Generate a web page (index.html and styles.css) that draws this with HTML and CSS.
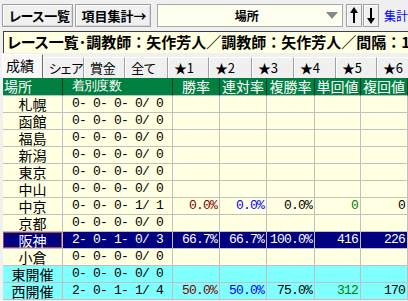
FILE: index.html
```html
<!DOCTYPE html>
<html lang="ja">
<head>
<meta charset="utf-8">
<title>項目集計</title>
<link rel="stylesheet" href="styles.css">
</head>
<body>
<div class="toolbar">
  <button class="btn btn-list">レース一覧</button>
  <button class="btn btn-agg">項目集計→</button>
  <div class="combo"><span class="combo-text">場所</span><span class="combo-arrow"></span></div>
  <button class="abtn"><svg width="14" height="21" viewBox="0 0 14 21"><rect x="6" y="6" width="2" height="12" fill="#000"/><polygon points="7,2 3,8 11,8" fill="#000"/></svg></button>
  <button class="abtn abtn-2"><svg width="14" height="21" viewBox="0 0 14 21"><rect x="6" y="3" width="2" height="12" fill="#000"/><polygon points="7,19 3,13 11,13" fill="#000"/></svg></button>
  <span class="link">集計</span>
</div>
<div class="titlebar"><span class="kana">レース一覧</span>･調教師：矢作芳人／調教師：矢作芳人／間隔：1</div>
<div class="tabs">
  <div class="tab active w41">成績</div>
  <div class="tab w41">シェア</div>
  <div class="tab w41">賞金</div>
  <div class="tab w43">全て</div>
  <div class="tab w41">★1</div>
  <div class="tab w43">★2</div>
  <div class="tab w42">★3</div>
  <div class="tab w42">★4</div>
  <div class="tab w41">★5</div>
  <div class="tab w42">★6</div>
</div>
<div class="table">
  <div class="row head">
    <div class="c place">場所</div><div class="c count">着別度数</div><div class="c">勝率</div><div class="c">連対率</div><div class="c">複勝率</div><div class="c">単回値</div><div class="c">複回値</div>
  </div>
  <div class="row"><div class="c place">札幌</div><div class="c count">0- 0- 0- 0/ 0</div><div class="c"></div><div class="c"></div><div class="c"></div><div class="c"></div><div class="c"></div></div>
  <div class="row"><div class="c place">函館</div><div class="c count">0- 0- 0- 0/ 0</div><div class="c"></div><div class="c"></div><div class="c"></div><div class="c"></div><div class="c"></div></div>
  <div class="row"><div class="c place">福島</div><div class="c count">0- 0- 0- 0/ 0</div><div class="c"></div><div class="c"></div><div class="c"></div><div class="c"></div><div class="c"></div></div>
  <div class="row"><div class="c place">新潟</div><div class="c count">0- 0- 0- 0/ 0</div><div class="c"></div><div class="c"></div><div class="c"></div><div class="c"></div><div class="c"></div></div>
  <div class="row"><div class="c place">東京</div><div class="c count">0- 0- 0- 0/ 0</div><div class="c"></div><div class="c"></div><div class="c"></div><div class="c"></div><div class="c"></div></div>
  <div class="row"><div class="c place">中山</div><div class="c count">0- 0- 0- 0/ 0</div><div class="c"></div><div class="c"></div><div class="c"></div><div class="c"></div><div class="c"></div></div>
  <div class="row"><div class="c place">中京</div><div class="c count">0- 0- 0- 1/ 1</div><div class="c num win">0.0%</div><div class="c num ren">0.0%</div><div class="c num">0.0%</div><div class="c num tan">0</div><div class="c num">0</div></div>
  <div class="row"><div class="c place">京都</div><div class="c count">0- 0- 0- 0/ 0</div><div class="c"></div><div class="c"></div><div class="c"></div><div class="c"></div><div class="c"></div></div>
  <div class="row hl"><div class="c place focus">阪神</div><div class="c count">2- 0- 1- 0/ 3</div><div class="c num win">66.7%</div><div class="c num ren">66.7%</div><div class="c num">100.0%</div><div class="c num tan">416</div><div class="c num">226</div></div>
  <div class="row"><div class="c place">小倉</div><div class="c count">0- 0- 0- 0/ 0</div><div class="c"></div><div class="c"></div><div class="c"></div><div class="c"></div><div class="c"></div></div>
  <div class="row cy"><div class="c place">東開催</div><div class="c count">0- 0- 0- 0/ 0</div><div class="c"></div><div class="c"></div><div class="c"></div><div class="c"></div><div class="c"></div></div>
  <div class="row cy"><div class="c place">西開催</div><div class="c count">2- 0- 1- 1/ 4</div><div class="c num win">50.0%</div><div class="c num ren">50.0%</div><div class="c num">75.0%</div><div class="c num tan">312</div><div class="c num">170</div></div>
</div>
</body>
</html>
```

FILE: styles.css
```css
* { box-sizing: border-box; }
html, body { margin: 0; padding: 0; }
body {
  width: 408px;
  height: 301px;
  overflow: hidden;
  background: #f0f0f0;
  color: #000;
  font-family: "Noto Sans CJK JP", "Noto Sans", sans-serif;
}

/* toolbar */
.toolbar {
  display: flex;
  align-items: flex-start;
  height: 30px;
  padding: 4px 0 0 2px;
  white-space: nowrap;
}
.btn {
  height: 23px;
  margin: 0;
  padding: 0 0 0 6px;
  background: #f0f0f0;
  border: 1px solid #a0a0a0;
  box-shadow: inset 1px 1px 0 #ffffff, inset -1px -1px 0 #d8d8d8;
  font-family: "Noto Sans CJK JP", sans-serif;
  font-weight: bold;
  font-size: 13px;
  line-height: 20px;
  font-feature-settings: "palt";
  text-align: left;
  white-space: nowrap;
  overflow: hidden;
  color: #000;
}
.btn-list { width: 72px; letter-spacing: -0.3px; }
.btn-agg { width: 76px; margin-left: 2px; padding-left: 5px; letter-spacing: 0; }
.combo {
  display: flex;
  align-items: center;
  width: 188px;
  height: 23px;
  margin-left: 6px;
  background: #fffff0;
  border: 1px solid #a8a8a8;
}
.combo-text {
  flex: 1;
  text-align: center;
  padding-left: 10px;
  font-weight: bold;
  font-size: 12px;
  line-height: 21px;
}
.combo-arrow {
  width: 0;
  height: 0;
  margin-right: 4px;
  border-left: 6px solid transparent;
  border-right: 6px solid transparent;
  border-top: 7px solid #888888;
}
.abtn {
  width: 16px;
  height: 23px;
  margin: 0 0 0 3px;
  padding: 0;
  background: #f0f0f0;
  border: 1px solid #a0a0a0;
  box-shadow: inset 1px 1px 0 #ffffff;
  display: flex;
  align-items: center;
  justify-content: center;
}
.abtn svg { display: block; }
.abtn-2 { margin-left: 1px; }
.link {
  margin-left: 5px;
  color: #0000ff;
  font-size: 12px;
  line-height: 23px;
}

/* title */
.titlebar {
  margin: 1px 0 0 3px;
  height: 22px;
  padding-left: 3px;
  background: #ffffe1;
  border-top: 1px solid #404040;
  border-left: 1px solid #404040;
  font-weight: bold;
  font-size: 15px;
  line-height: 20px;
  white-space: nowrap;
  overflow: hidden;
}
.kana { font-feature-settings: "palt"; }

/* tabs */
.tabs {
  display: flex;
  align-items: flex-end;
  height: 24px;
  margin-top: 1px;
  padding-left: 2px;
  overflow: hidden;
}
.tab {
  flex: none;
  height: 21px;
  padding-left: 5px;
  border-top: 1px solid #ffffff;
  border-left: 1px solid #ffffff;
  border-right: 1px solid #a0a0a0;
  font-size: 13px;
  line-height: 19px;
  font-feature-settings: "palt";
  letter-spacing: -0.3px;
  white-space: nowrap;
}
.tab.active {
  height: 24px;
  padding-left: 3px;
  line-height: 20px;
  font-size: 14px;
  letter-spacing: 0;
  background: #f8f8f8;
  border-right: 1px solid #696969;
}
.w41 { width: 41px; }
.w42 { width: 42px; }
.w43 { width: 43px; }

/* table */
.table {
  margin-left: 3px;
  width: 405px;
}
.row {
  display: grid;
  grid-template-columns: 60px 110px 47px 47px 48px 46px 47px;
  height: 17px;
  background: #ffffe1;
}
.row.head {
  height: 18px;
  background: #008040;
  color: #ffffff;
}
.c {
  border-right: 1px solid #c0c0c0;
  border-bottom: 1px solid #c0c0c0;
  font-size: 14px;
  line-height: 16px;
  white-space: nowrap;
  overflow: hidden;
  text-align: center;
}
.head .c {
  border-right: 1px solid #1c3a26;
  border-bottom: 1px solid #c0c0c0;
  line-height: 17px;
}
.head .c.place { text-align: left; padding-left: 1px; }
.head .c.count { text-align: left; padding-left: 9px; }
.c.count, .c.num {
  font-family: "Liberation Mono", "DejaVu Sans Mono", monospace;
  font-size: 13px;
  letter-spacing: -0.8px;
}
.c.num { text-align: right; padding-right: 2px; }
.win { color: #800000; }
.ren { color: #0000ff; }
.tan { color: #008000; }
.row.hl { background: #000080; color: #ffffff; }
.row.hl .c { color: #ffffff; }
.c.focus { box-shadow: inset 0 0 0 1px #b04848; }
.row.cy { background: #80ffff; }
```
